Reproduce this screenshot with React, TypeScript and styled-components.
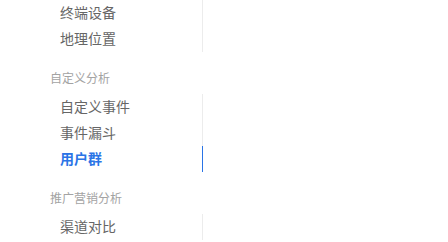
import styled, { createGlobalStyle } from 'styled-components'

const GlobalStyle = createGlobalStyle`
  body {
    margin: 0;
    background: #fff;
    font-family: "Noto Sans CJK SC", "Liberation Sans", sans-serif;
  }
`

const Sidebar = styled.nav`
  width: 203px;
`

const Group = styled.div``

const GroupTitle = styled.div`
  padding: 16px 0 6px 50px;
  font-size: 12px;
  line-height: 20px;
  color: #a3a3a3;
`

const List = styled.ul`
  list-style: none;
  margin: 0;
  padding: 0;
  border-right: 1px solid #ececec;
`

const Item = styled.li<{ $active?: boolean }>`
  height: 26px;
  box-sizing: border-box;
  padding: 0 0 2px 60px;
  line-height: 24px;
  font-size: 14px;
  color: ${p => (p.$active ? '#2a74e6' : '#666')};
  font-weight: ${p => (p.$active ? 700 : 400)};
  margin-right: -1px;
  border-right: 1px solid ${p => (p.$active ? '#2a74e6' : 'transparent')};
`

const groups = [
  { title: '', items: ['终端设备', '地理位置'] },
  { title: '自定义分析', items: ['自定义事件', '事件漏斗', '用户群'] },
  { title: '推广营销分析', items: ['渠道对比'] },
]

export default function App() {
  return (
    <>
      <GlobalStyle />
      <Sidebar>
        {groups.map(g => (
          <Group key={g.title || 'top'}>
            {g.title && <GroupTitle>{g.title}</GroupTitle>}
            <List>
              {g.items.map(i => (
                <Item key={i} $active={i === '用户群'}>{i}</Item>
              ))}
            </List>
          </Group>
        ))}
      </Sidebar>
    </>
  )
}
